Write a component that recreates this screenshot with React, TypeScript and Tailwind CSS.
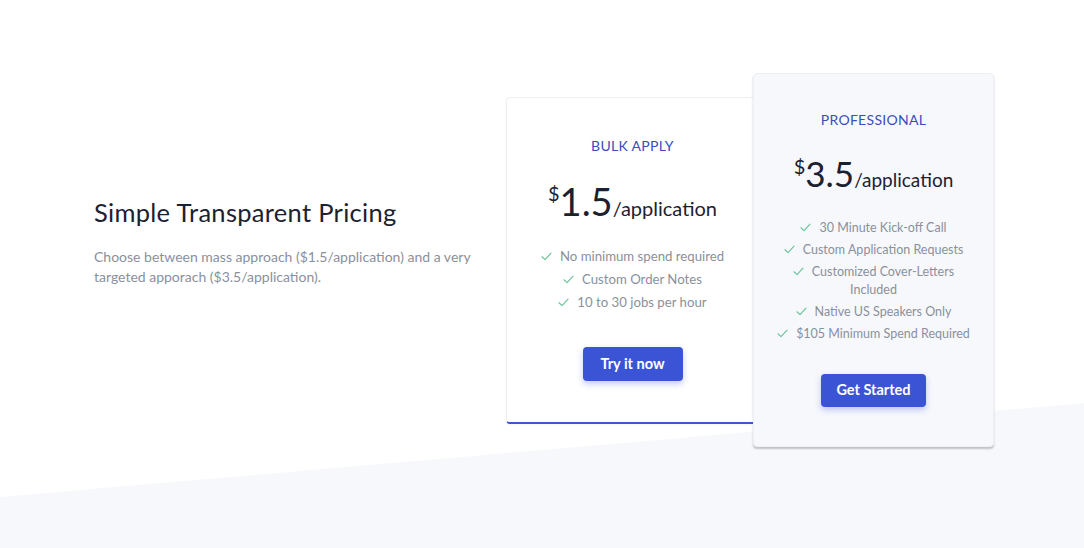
import React from 'react';

const Check = () => (
  <svg width="11" height="9" viewBox="0 0 11 9" fill="none" className="inline-block align-baseline mr-[8px]">
    <path d="M1 4.8L4 7.6L10 1.2" stroke="#6cc49a" strokeWidth="1.2" strokeLinecap="round" strokeLinejoin="round" />
  </svg>
);

const Feature = ({ text, small }: { text: string; small?: boolean }) => (
  <li className={small ? 'text-[12.5px] leading-[18px]' : 'text-[13.2px] leading-[23px]'}>
    <Check />
    {text}
  </li>
);

export default function App() {
  return (
    <div
      className="relative h-[548px] overflow-hidden bg-white"
      style={{ fontFamily: 'Lato, "Noto Sans", sans-serif' }}
    >
      <svg className="absolute inset-0" width="1084" height="548" viewBox="0 0 1084 548">
        <polygon points="0,497 1084,403 1084,548 0,548" fill="#f7f8fc" />
      </svg>

      <div className="relative flex pl-[94px] pt-[73px]">
        {/* intro */}
        <div className="w-[412px] pt-[123px]">
          <h2 className="text-[25.5px] leading-[32px] text-[#1c2130] tracking-[0.3px]">Simple Transparent Pricing</h2>
          <p className="mt-[19px] w-[380px] text-[14px] leading-[20px] text-[#8a909c]">
            Choose between mass approach ($1.5/application) and a very targeted apporach ($3.5/application).
          </p>
        </div>

        {/* bulk */}
        <div className="mt-[24px] flex h-[327px] w-[253px] flex-col items-center rounded-[4px] border border-[#eef0f4] border-b-2 border-b-[#3f57d3] bg-white pt-[38px] shadow-[0_1px_3px_rgba(0,0,0,0.04)]">
          <div className="text-[14px] leading-[20px] text-[#3a4cbf] tracking-[0.3px]">BULK APPLY</div>
          <div className="mt-[25px] flex items-baseline text-[#1c2130]">
            <span className="self-start pt-[2px] text-[20px] leading-[20px]">$</span>
            <span className="text-[38px] leading-[40px]">1.5</span>
            <span className="text-[20px]">/application</span>
          </div>
          <ul className="mt-[22px] flex flex-col items-center text-center text-[#8a909c]">
            <Feature text="No minimum spend required" />
            <Feature text="Custom Order Notes" />
            <Feature text="10 to 30 jobs per hour" />
          </ul>
          <button className="mt-[33px] h-[34px] w-[100px] rounded-[4px] bg-[#3b54d6] text-[14.5px] font-bold text-white shadow-[0_3px_6px_rgba(59,84,214,0.3)]">
            Try it now
          </button>
        </div>

        {/* professional */}
        <div className="relative -ml-[6px] flex h-[374px] w-[241px] flex-col items-center rounded-[4px] border border-[#eef0f5] bg-[#f7f8fc] px-[22px] pt-[36px] shadow-[0_2px_2px_rgba(0,0,0,0.22)]">
          <div className="text-[14px] leading-[20px] text-[#3a4cbf] tracking-[0.3px]">PROFESSIONAL</div>
          <div className="mt-[24px] flex items-baseline text-[#1c2130]">
            <span className="self-start pt-[2px] text-[20px] leading-[20px]">$</span>
            <span className="text-[35px] leading-[38px]">3.5</span>
            <span className="text-[19px]">/application</span>
          </div>
          <ul className="mt-[24px] flex flex-col items-center gap-[4px] text-center text-[#8a909c]">
            <Feature small text="30 Minute Kick-off Call" />
            <Feature small text="Custom Application Requests" />
            <Feature small text="Customized Cover-Letters Included" />
            <Feature small text="Native US Speakers Only" />
            <Feature small text="$105 Minimum Spend Required" />
          </ul>
          <button className="mt-[31px] h-[33px] w-[105px] rounded-[4px] bg-[#3b54d6] text-[14.5px] font-bold text-white shadow-[0_3px_6px_rgba(59,84,214,0.3)]">
            Get Started
          </button>
        </div>
      </div>
    </div>
  );
}
